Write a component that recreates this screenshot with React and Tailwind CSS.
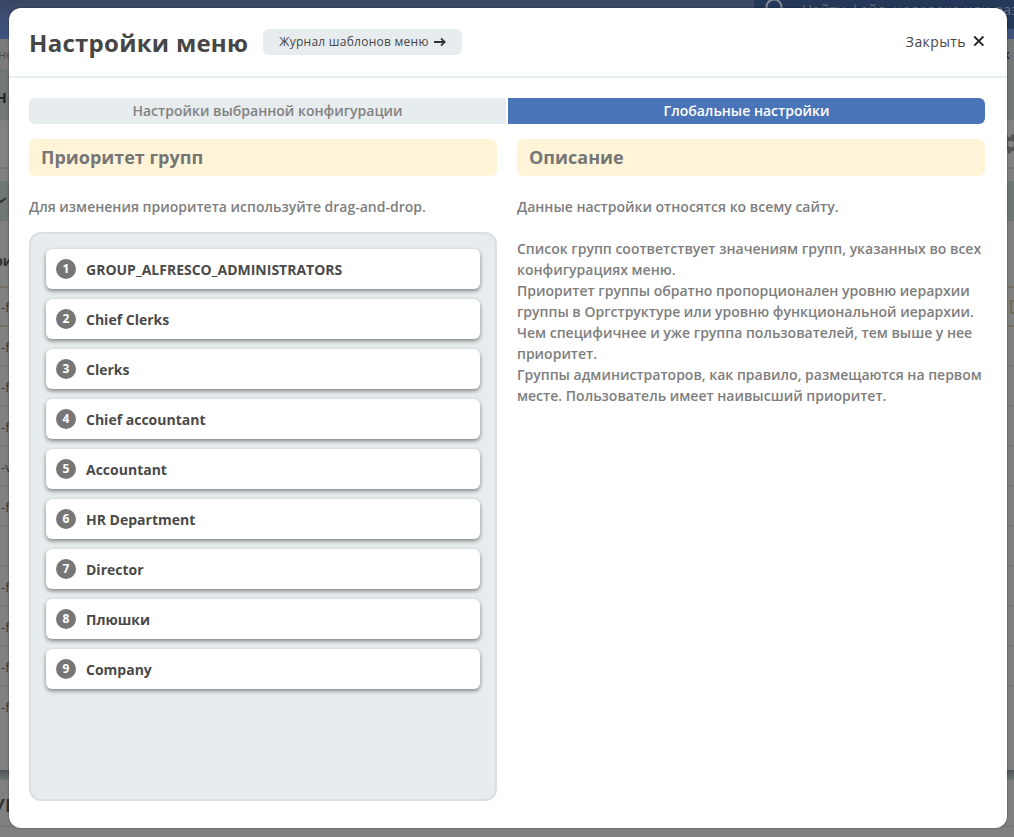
import React from 'react';

const groups = [
  'GROUP_ALFRESCO_ADMINISTRATORS',
  'Chief Clerks',
  'Clerks',
  'Chief accountant',
  'Accountant',
  'HR Department',
  'Director',
  'Плюшки',
  'Company',
];

const journalRows = ['-f', '-f', '-f', '-v', '-f', '', '-f', '-f', '-f'];

function GearIcon() {
  return (
    <svg width="20" height="20" viewBox="0 0 20 20" fill="none" stroke="#555555">
      <circle cx="10" cy="10" r="5.3" strokeWidth="4" />
      <circle cx="10" cy="10" r="8.3" strokeWidth="3" strokeDasharray="3.26 3.26" />
    </svg>
  );
}

function Backdrop() {
  return (
    <div className="h-full w-full overflow-hidden bg-[#808080] text-[13px] text-[#333333]">
      <div className="flex h-[39px] justify-end bg-linear-to-b from-[#384762] to-[#405480]">
        <div className="flex h-[29px] w-[260px] bg-[#243859] text-[#657085]">
          <svg className="ml-[10px] -mt-[2px] shrink-0" width="20" height="20" viewBox="0 0 20 20" fill="none" stroke="#858b95" strokeWidth="2">
            <circle cx="10" cy="9" r="7.5" />
            <path d="M15 14l5 5" />
          </svg>
          <span className="ml-[18px] whitespace-nowrap text-[14px] leading-[20px] tracking-[0.3px]">Найти файл, человека или раз</span>
        </div>
      </div>
      <div className="flex h-[81px] justify-between bg-[#707776]">
        <div className="w-[500px]">
          <div className="h-[30px] bg-[#7c7a7a] leading-[30px] text-[#4d4d4d]"><span className="-ml-[2px]">но</span></div>
          <div className="-ml-[4px] text-[14px] font-bold leading-[58px] text-[#202225]">Н</div>
        </div>
        <span className="pr-[4px] font-bold leading-[30px]">к</span>
      </div>
      <div className="-mr-[7px] flex h-[47px] items-center justify-end border-t border-[#7a7e7e] bg-[#828282]">
        <GearIcon />
      </div>
      <div className="h-[14px] border-t-2 border-[#727878]" />
      <div className="flex h-[40px] items-center bg-[#6f7676]">
        <svg className="-ml-[3px]" width="10" height="8" viewBox="0 0 10 8" fill="none" stroke="#333333" strokeWidth="2">
          <path d="M1 2l3 3 5-4" />
        </svg>
      </div>
      <div className="-ml-[6px] h-[65px] pt-[28px] text-[14px] font-bold leading-[24px]">ри</div>
      <div className="flex h-[39px] items-center justify-between border-t-2 border-[#777064] leading-[36px]">
        <span className="pl-px">-f</span>
        <span className="h-[14px] w-[4px] border-2 border-r-0 border-[#746b55]" />
      </div>
      {journalRows.map((label, i) => (
        <div
          key={i}
          className={
            i === 0
              ? 'h-[40px] border-t-2 border-[#777064] pl-px leading-[40px]'
              : 'h-[40px] border-t-2 border-[#737979] pl-px leading-[40px]'
          }
        >
          {label}
        </div>
      ))}
      <div className="h-[85px] border-t-2 border-[#737979] pl-px leading-[40px]">-f</div>
      <div className="h-[10px] bg-linear-to-b from-[#4c5155] to-[#707576]" />
      <div className="-ml-[7px] h-[47px] border-b-2 border-[#747878] text-[18px] font-bold leading-[50px]">УР</div>
    </div>
  );
}

function SectionTitle({ children }) {
  return (
    <h2 className="h-[37px] rounded-[6px] bg-[#fff4d8] px-3 text-[18px] font-bold leading-[37px] text-[#767676]">
      {children}
    </h2>
  );
}

function Dialog() {
  return (
    <div className="flex h-[820px] w-[998px] flex-col rounded-[12px] bg-white shadow-[0_0_2px_rgba(0,0,0,0.5)]">
      <header className="flex h-[70px] shrink-0 items-start justify-between border-b-2 border-[#e8edf0] pl-5 pr-[22px]">
        <div className="flex">
          <h1 className="mt-[18px] w-[234px] whitespace-nowrap text-[24px] font-bold leading-[34px] tracking-[0.27px] text-[#464646]">Настройки меню</h1>
          <button className="mt-[21px] flex h-[26px] w-[199px] items-center justify-center gap-[5px] rounded-[6px] bg-[#e7ecee] text-[12px] tracking-[0.26px] text-[#464646]">
            Журнал шаблонов меню
            <svg width="12" height="10" viewBox="0 0 12 10" fill="none" stroke="#333333" strokeWidth="1.8">
              <path d="M0 5h10.5M7 1.3L10.7 5 7 8.7" />
            </svg>
          </button>
        </div>
        <button className="mt-[23px] flex h-5 items-center gap-[7px] text-[14px] tracking-[0.4px] text-[#464646]">
          Закрыть
          <svg width="12" height="12" viewBox="0 0 12 12" fill="none" stroke="#222222" strokeWidth="1.8">
            <path d="M1.2 1.5l9.2 9.2M10.4 1.5l-9.2 9.2" />
          </svg>
        </button>
      </header>
      <main className="px-5 pt-5">
        <div className="flex h-[26px] w-[956px] gap-[2px] text-center text-[14px] leading-[26px]">
          <div className="flex-1 rounded-l-[6px] bg-[#e7ecee] font-semibold text-[#828282]">Настройки выбранной конфигурации</div>
          <div className="flex-1 rounded-r-[6px] bg-[#4a74b8] font-semibold text-white">Глобальные настройки</div>
        </div>
        <div className="mt-[15px] grid w-[956px] grid-cols-2 gap-5">
          <section>
            <SectionTitle>Приоритет групп</SectionTitle>
            <p className="mt-5 text-[14px] font-semibold leading-[21px] text-[#7e7e7e]">Для изменения приоритета используйте drag-and-drop.</p>
            <ul className="mt-[15px] flex h-[569px] flex-col gap-[10px] rounded-[12px] border-2 border-[#d9dfe2] bg-[#e7ecee] px-[15px] pt-[15px]">
              {groups.map((name, i) => (
                <li key={name} className="flex h-10 items-center gap-[10px] rounded-[6px] bg-white px-[10px] text-[14px] font-bold text-[#4a4a4a] shadow-[0_2px_4px_rgba(0,0,0,0.45)]">
                  <span className="flex h-5 w-5 items-center justify-center rounded-full bg-[#767676] text-[12px] font-bold leading-none text-white">{i + 1}</span>
                  <span>{name}</span>
                </li>
              ))}
            </ul>
          </section>
          <section>
            <SectionTitle>Описание</SectionTitle>
            <div className="mt-5 text-[14px] font-semibold leading-[21px] text-[#7e7e7e]">
              <p>Данные настройки относятся ко всему сайту.</p>
              <p className="mt-[21px]">Список групп соответствует значениям групп, указанных во всех конфигурациях меню.</p>
              <p>Приоритет группы обратно пропорционален уровню иерархии группы в Оргструктуре или уровню функциональной иерархии.</p>
              <p>Чем специфичнее и уже группа пользователей, тем выше у нее приоритет.</p>
              <p>Группы администраторов, как правило, размещаются на первом месте. Пользователь имеет наивысший приоритет.</p>
            </div>
          </section>
        </div>
      </main>
    </div>
  );
}

export default function App() {
  return (
    <div className="relative h-[837px] w-[1014px] overflow-hidden font-['Open_Sans','Noto_Sans',sans-serif]">
      <Backdrop />
      <div className="absolute left-[9px] top-[8px]">
        <Dialog />
      </div>
    </div>
  );
}
